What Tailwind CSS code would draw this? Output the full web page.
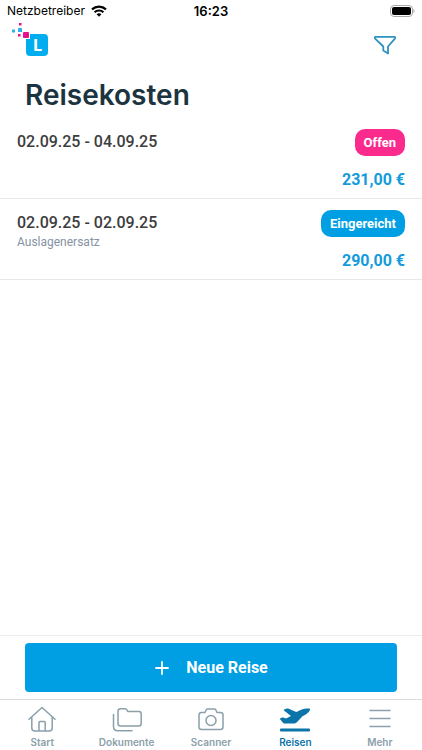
<!DOCTYPE html>
<html lang="de">
<head>
  <meta charset="UTF-8">
  <meta name="viewport" content="width=device-width, initial-scale=1.0">
  <title>Reisekosten</title>
  <script src="https://cdn.jsdelivr.net/npm/@tailwindcss/browser@4"></script>
</head>

<body class="bg-white min-h-screen flex flex-col font-[Roboto,sans-serif]">

  <!-- Status bar -->
  <div class="h-[22px] px-[7px] grid grid-cols-3 items-center text-black text-[13px] leading-4 font-[Inter,sans-serif]">
    <div class="flex items-center gap-1.5">
      <span class="text-xs">Netzbetreiber</span>
      <svg class="w-4 h-3" viewBox="0 0 16 12" fill="none" stroke="#000" stroke-width="2.2">
        <path d="M1 4.4C5 .6 11 .6 15 4.4"/>
        <path d="M3.600 7.200C6 4.900 10 4.900 12.400 7.200"/>
        <path d="M8 11.700L5.600 9.300C6.900 8 9.100 8 10.400 9.300Z" fill="#000" stroke="none"/>
      </svg>
    </div>
    <span class="text-center font-semibold">16:23</span>
    <svg class="w-[25px] h-3 justify-self-end" viewBox="0 0 25 12">
      <rect x=".5" y=".5" width="22" height="11" rx="3.500" fill="none" stroke="#a8a8a8"/>
      <rect x="2" y="2" width="19" height="8" rx="2" fill="#000"/>
      <path d="M23.500 4v4c1.400-.5 1.400-3.500 0-4z" fill="#999"/>
    </svg>
  </div>

  <!-- Header -->
  <header>
    <div class="flex items-start justify-between pl-3 pr-6 h-11">
      <svg class="w-9 h-9" viewBox="0 0 36 36" role="img" aria-label="Logo">
        <rect x="14" y="12" width="22" height="22" rx="4" fill="#00adef"/>
        <rect x="10" y="9" width="8" height="8" fill="#fff"/>
        <rect x="11" y="10" width="6" height="6" rx="1" fill="#e5138b"/>
        <rect x="7" y="1" width="2.500" height="2.500" fill="#e5138b"/>
        <rect x="6" y="6" width="4" height="4" rx=".5" fill="#27b4ea"/>
        <rect x="0" y="7.500" width="3" height="3" rx=".5" fill="#27b4ea"/>
        <rect x="6" y="12" width="2.500" height="2.500" fill="#e5138b"/>
        <text x="25.500" y="29" text-anchor="middle" font-family="Lato, sans-serif" font-weight="900" font-size="17" fill="#fff">L</text>
      </svg>
      <button type="button" aria-label="Filter" class="pt-[11px]">
        <svg class="w-[26px] h-6" viewBox="0 0 26 24" fill="none" stroke="#2f92bd" stroke-width="1.800" stroke-linejoin="round">
          <path d="M3.500 3.900H22.500Q23.800 4.300 22.900 5.600L16 13.500V20.600L11.300 17.500V13.500L3.100 5.600Q2.300 4.300 3.500 3.900Z"/>
        </svg>
      </button>
    </div>
    <h1 class="px-[25px] pt-[9px] pb-[3px] text-[28px] leading-10 font-semibold text-[#1c343f] font-[Inter,sans-serif]">Reisekosten</h1>
  </header>

  <!-- Trips -->
  <main class="flex-1">
    <ul>
      <li class="flex justify-between h-[81px] px-[17px] pt-[11px] border-b border-[#e6e8ea]">
        <div>
          <p class="text-base leading-[26px] font-medium text-[#3d3d3d]">02.09.25 - 04.09.25</p>
        </div>
        <div class="flex flex-col items-end gap-[14px]">
          <span class="rounded-[10px] bg-[#fb2b8d] px-[9px] py-1 text-[13px] leading-[19px] font-bold text-white">Offen</span>
          <span class="text-base leading-5 font-bold text-[#139bdc]">231,00 €</span>
        </div>
      </li>
      <li class="flex justify-between h-[81px] px-[17px] pt-[11px] border-b border-[#e6e8ea]">
        <div>
          <p class="text-base leading-[26px] font-medium text-[#3d3d3d]">02.09.25 - 02.09.25</p>
          <p class="text-xs leading-3 text-[#8592a3]">Auslagenersatz</p>
        </div>
        <div class="flex flex-col items-end gap-[14px]">
          <span class="rounded-[10px] bg-[#009fe3] px-[9px] py-1 text-[13px] leading-[19px] font-bold text-white">Eingereicht</span>
          <span class="text-base leading-5 font-bold text-[#139bdc]">290,00 €</span>
        </div>
      </li>
    </ul>
  </main>

  <!-- New trip -->
  <div class="border-t border-[#ececee] px-[25px] py-[7px]">
    <button type="button" class="w-full h-[49px] rounded bg-[#009fe3] text-white text-base font-bold flex items-center justify-center gap-4">
      <svg class="w-4 h-4" viewBox="0 0 16 16" stroke="#fff" stroke-width="1.800" stroke-linecap="round"><path d="M8 2v12M2 8h12"/></svg>
      Neue Reise
    </button>
  </div>

  <!-- Tab bar -->
  <nav class="h-[51px] border-t border-[#dadcde] pt-1 grid grid-cols-5 text-[10px] leading-3 font-semibold text-[#8ba0aa] font-[Inter,sans-serif]">
    <a href="#" class="flex flex-col items-center">
      <svg class="w-8 h-8" viewBox="0 0 32 32" fill="none" stroke="#8ba0aa" stroke-width="1.500" stroke-linecap="round" stroke-linejoin="round">
        <path d="M3 15.300L16 3.500L29 15.300M5.800 13.200V24Q5.800 27 8.800 27H23.200Q26.200 27 26.200 24V13.200M13 27V18.500Q13 17.500 14 17.500H18.200Q19.200 17.500 19.200 18.500V27"/>
      </svg>
      Start
    </a>
    <a href="#" class="flex flex-col items-center">
      <svg class="w-8 h-8" viewBox="0 0 32 32" fill="none" stroke="#8ba0aa" stroke-width="1.500" stroke-linecap="round" stroke-linejoin="round">
        <path d="M7 7.200Q7 4.700 9.500 4.700H14Q15.400 4.700 16 6L16.700 7.500H28Q30.200 7.500 30.200 9.800V19.500Q30.200 22 27.700 22H9.500Q7 22 7 19.500ZM2.500 10.500V22.500Q2.500 26.700 6.700 26.700H21"/>
      </svg>
      Dokumente
    </a>
    <a href="#" class="flex flex-col items-center">
      <svg class="w-8 h-8" viewBox="0 0 32 32" fill="none" stroke="#8ba0aa" stroke-width="1.500" stroke-linejoin="round">
        <path d="M6.500 8.500H10L11.300 5.700Q11.700 5 12.500 5H19.500Q20.300 5 20.700 5.700L22 8.500H25.500Q28 8.500 28 11V23Q28 25.500 25.500 25.500H6.500Q4 25.500 4 23V11Q4 8.500 6.500 8.500Z"/>
        <circle cx="16" cy="16.500" r="5"/>
      </svg>
      Scanner
    </a>
    <a href="#" aria-current="page" class="flex flex-col items-center text-[#0b74a8]">
      <svg class="w-8 h-8" viewBox="0 0 32 32" fill="#0b74a8">
        <path d="M5.200 5.600L8 4.600Q8.600 4.400 9.200 4.600L17.300 8L22.800 5.400Q25.500 4.300 30.300 4.600Q31.300 4.700 31 6Q30.100 8.700 26.800 10.500L23.500 12.200L17.900 18.300Q17 19.200 15.500 19.500L5.700 19.600Q4.700 19.600 4.200 18.900L1.100 15.200Q.7 14.500 1.400 14.200L3.200 13.500Q3.700 13.300 4.200 13.500L7 14.600L12 12.100L4.900 6.400Q4.500 5.900 5.200 5.600Z"/>
        <rect x="1" y="24.500" width="30" height="3" rx="1"/>
      </svg>
      Reisen
    </a>
    <a href="#" class="flex flex-col items-center">
      <svg class="w-8 h-8" viewBox="0 0 32 32" fill="none" stroke="#8ba0aa" stroke-width="1.500" stroke-linecap="round">
        <path d="M6 6.500H26M6 14.500H26M6 22.500H26"/>
      </svg>
      Mehr
    </a>
  </nav>

</body>
</html>
